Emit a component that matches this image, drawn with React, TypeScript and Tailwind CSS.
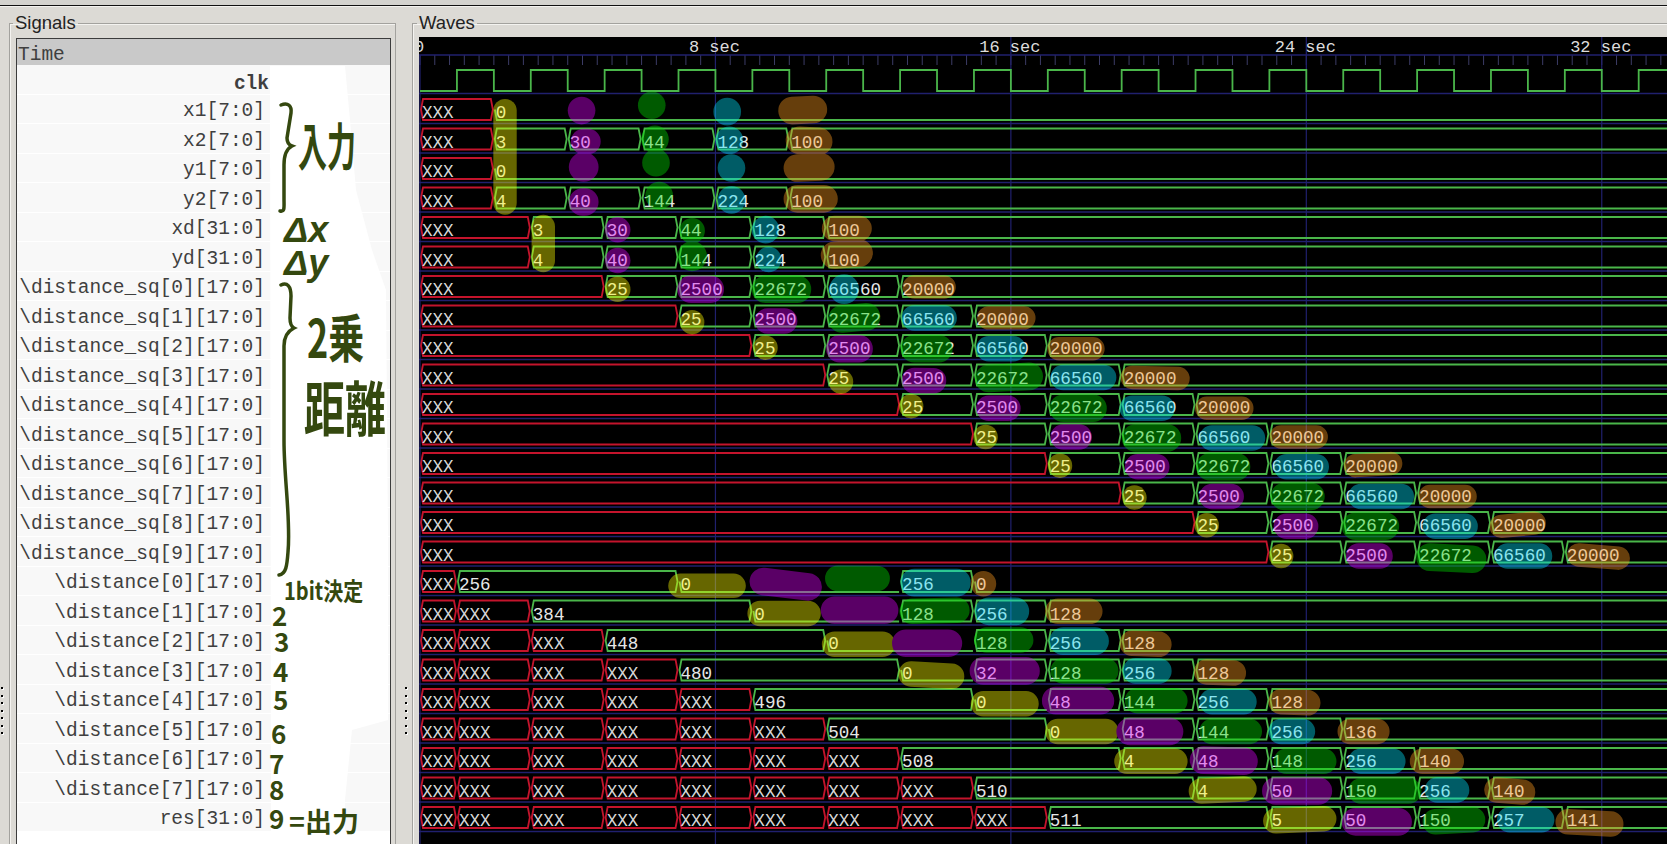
const SEC = 36.93;
const T0 = 420;
const ROW_TOP = 99;
const ROW_H = 29.5;
const BOX_H = 21;
const GREEN = "#4ab64a";
const RED = "#c4142c";
const BLUE = "#20206e";

type Seg = [number, string];

const xs = (...t: number[]): Seg[] => t.map((s) => [s, "XXX"]);
const sq = (k: number): Seg[] => [
  [0, "XXX"],
  [5 + 2 * k, "25"],
  [7 + 2 * k, "2500"],
  [9 + 2 * k, "22672"],
  [11 + 2 * k, "66560"],
  [13 + 2 * k, "20000"],
];

const signals: { name: string; segs: Seg[] }[] = [
  { name: "x1[7:0]", segs: [[0, "XXX"], [2, "0"]] },
  { name: "x2[7:0]", segs: [[0, "XXX"], [2, "3"], [4, "30"], [6, "44"], [8, "128"], [10, "100"]] },
  { name: "y1[7:0]", segs: [[0, "XXX"], [2, "0"]] },
  { name: "y2[7:0]", segs: [[0, "XXX"], [2, "4"], [4, "40"], [6, "144"], [8, "224"], [10, "100"]] },
  { name: "xd[31:0]", segs: [[0, "XXX"], [3, "3"], [5, "30"], [7, "44"], [9, "128"], [11, "100"]] },
  { name: "yd[31:0]", segs: [[0, "XXX"], [3, "4"], [5, "40"], [7, "144"], [9, "224"], [11, "100"]] },
  ...[0, 1, 2, 3, 4, 5, 6, 7, 8, 9].map((k) => ({ name: `\\distance_sq[${k}][17:0]`, segs: sq(k) })),
  { name: "\\distance[0][17:0]", segs: [...xs(0), [1, "256"], [7, "0"], [13, "256"], [15, "0"]] },
  { name: "\\distance[1][17:0]", segs: [...xs(0, 1), [3, "384"], [9, "0"], [13, "128"], [15, "256"], [17, "128"]] },
  { name: "\\distance[2][17:0]", segs: [...xs(0, 1, 3), [5, "448"], [11, "0"], [15, "128"], [17, "256"], [19, "128"]] },
  { name: "\\distance[3][17:0]", segs: [...xs(0, 1, 3, 5), [7, "480"], [13, "0"], [15, "32"], [17, "128"], [19, "256"], [21, "128"]] },
  { name: "\\distance[4][17:0]", segs: [...xs(0, 1, 3, 5, 7), [9, "496"], [15, "0"], [17, "48"], [19, "144"], [21, "256"], [23, "128"]] },
  { name: "\\distance[5][17:0]", segs: [...xs(0, 1, 3, 5, 7, 9), [11, "504"], [17, "0"], [19, "48"], [21, "144"], [23, "256"], [25, "136"]] },
  { name: "\\distance[6][17:0]", segs: [...xs(0, 1, 3, 5, 7, 9, 11), [13, "508"], [19, "4"], [21, "48"], [23, "148"], [25, "256"], [27, "140"]] },
  { name: "\\distance[7][17:0]", segs: [...xs(0, 1, 3, 5, 7, 9, 11, 13), [15, "510"], [21, "4"], [23, "50"], [25, "150"], [27, "256"], [29, "140"]] },
  { name: "res[31:0]", segs: [...xs(0, 1, 3, 5, 7, 9, 11, 13, 15), [17, "511"], [23, "5"], [25, "50"], [27, "150"], [29, "257"], [31, "141"]] },
];

// highlighter marks, measured on the 1568 wide picture: x1 y1 x2 y2 width
type Mark = [number, number, number, number, number];
const OLIVE: Mark[] = [
  [475, 104, 475, 191, 22], [511, 213, 511, 245, 22], [581, 272, 581, 272, 24], [651, 303, 651, 303, 23],
  [720, 327, 720, 327, 23], [791, 359, 791, 359, 23], [857, 382, 857, 382, 23], [927, 411, 927, 411, 23],
  [997, 438, 997, 438, 23], [1067, 468, 1067, 468, 23], [1135, 494, 1135, 494, 23], [1205, 523, 1205, 523, 23],
  [640, 551, 690, 551, 23], [715, 577, 760, 577, 24], [785, 606, 830, 606, 24], [857, 634, 895, 636, 24],
  [925, 662, 965, 662, 24], [995, 688, 1040, 688, 24], [1060, 716, 1105, 716, 24], [1130, 744, 1170, 742, 24],
  [1200, 772, 1245, 770, 24],
];
const PURPLE: Mark[] = [
  [547, 104, 547, 104, 26], [549, 133, 553, 133, 24], [549, 157, 549, 157, 28], [548, 190, 550, 190, 26],
  [581, 216, 581, 216, 24], [581, 245, 581, 245, 24], [650, 272, 668, 272, 26], [722, 302, 738, 302, 24],
  [790, 328, 808, 328, 26], [860, 358, 878, 358, 24], [930, 384, 948, 384, 24], [1000, 411, 1015, 411, 24],
  [1070, 439, 1088, 439, 24], [1140, 467, 1158, 467, 24], [1210, 495, 1228, 495, 24], [1278, 523, 1298, 523, 24],
  [718, 547, 760, 552, 26], [785, 574, 832, 574, 26], [852, 605, 892, 605, 26], [925, 631, 965, 631, 26],
  [993, 659, 1035, 659, 26], [1063, 688, 1100, 688, 26], [1132, 715, 1170, 716, 26], [1200, 744, 1240, 744, 26],
  [1275, 773, 1315, 773, 26],
];
const DARKGREEN: Mark[] = [
  [613, 99, 613, 99, 26], [616, 131, 616, 131, 26], [617, 153, 617, 153, 26], [620, 184, 620, 184, 26],
  [651, 217, 651, 217, 24], [651, 241, 651, 241, 28], [720, 272, 750, 272, 26], [792, 300, 815, 298, 26],
  [860, 328, 883, 328, 26], [930, 356, 968, 354, 26], [1000, 384, 1028, 384, 26], [1068, 412, 1098, 412, 26],
  [1138, 439, 1163, 439, 26], [1208, 467, 1233, 467, 26], [1275, 495, 1303, 495, 26], [1345, 524, 1385, 526, 26],
  [788, 544, 825, 544, 24], [858, 575, 900, 574, 24], [928, 602, 960, 602, 24], [1000, 631, 1040, 631, 24],
  [1070, 659, 1105, 659, 24], [1140, 688, 1175, 688, 24], [1210, 716, 1245, 716, 24], [1280, 744, 1325, 744, 24],
  [1350, 773, 1385, 771, 24],
];
const TEAL: Mark[] = [
  [684, 105, 684, 105, 26], [686, 132, 686, 132, 26], [688, 158, 688, 158, 26], [688, 188, 688, 188, 26],
  [720, 216, 720, 216, 26], [723, 244, 723, 244, 24], [794, 272, 794, 272, 28], [860, 299, 888, 299, 24],
  [930, 328, 953, 328, 24], [1000, 355, 1038, 355, 24], [1065, 384, 1093, 384, 24], [1140, 412, 1178, 412, 24],
  [1210, 439, 1238, 439, 24], [1280, 467, 1318, 467, 24], [1350, 495, 1378, 495, 24], [1418, 523, 1448, 523, 24],
  [860, 548, 900, 548, 26], [930, 575, 955, 575, 26], [1000, 603, 1030, 603, 26], [1068, 631, 1090, 631, 24],
  [1140, 660, 1170, 660, 24], [1205, 688, 1225, 688, 24], [1280, 716, 1310, 716, 24], [1352, 743, 1370, 743, 24],
  [1420, 771, 1450, 771, 24],
];
const BROWN: Mark[] = [
  [745, 104, 765, 103, 26], [752, 132, 770, 133, 26], [750, 158, 772, 157, 26], [750, 187, 775, 187, 26],
  [785, 215, 808, 215, 24], [785, 240, 808, 238, 26], [860, 270, 888, 270, 22], [930, 299, 963, 299, 22],
  [996, 328, 1028, 328, 22], [1065, 355, 1108, 356, 22], [1135, 384, 1168, 384, 22], [1205, 411, 1238, 411, 22],
  [1275, 438, 1308, 436, 22], [1345, 467, 1378, 467, 22], [1412, 495, 1443, 492, 22], [1485, 522, 1522, 525, 22],
  [925, 549, 925, 549, 24], [995, 575, 1025, 575, 24], [1065, 605, 1090, 606, 24], [1135, 632, 1160, 633, 24],
  [1205, 660, 1230, 661, 24], [1270, 688, 1295, 688, 24], [1338, 716, 1365, 716, 24], [1408, 743, 1432, 745, 24],
  [1475, 773, 1515, 775, 24],
];
const marks: [string, Mark[]][] = [
  ["#ffff00", OLIVE],
  ["#e000ff", PURPLE],
  ["#00e000", DARKGREEN],
  ["#00e5ff", TEAL],
  ["#ff9c20", BROWN],
];

const Wave = ({ segs, top }: { segs: Seg[]; top: number }) => (
  <g>
    {segs.map(([start, label], i) => {
      const x0 = T0 + start * SEC;
      const x1 = i + 1 < segs.length ? T0 + segs[i + 1][0] * SEC : 1700;
      const bot = top + BOX_H;
      const mid = top + BOX_H / 2;
      const isX = label === "XXX";
      return (
        <g key={i}>
          {label === "0" ? (
            <path d={`M${x0 + 1} ${mid}L${x0 + 3} ${bot}H${x1 - 1}`} fill="none" stroke={GREEN} strokeWidth={1.8} />
          ) : (
            <path
              d={`M${x0 + 1} ${mid}L${x0 + 3} ${top}H${x1 - 3}L${x1 - 1} ${mid}L${x1 - 3} ${bot}H${x0 + 3}Z`}
              fill="none"
              stroke={isX ? RED : GREEN}
              strokeWidth={1.8}
            />
          )}
          <text x={x0 + 2} y={top + 19} fontSize={17.6} fill={isX ? "#d8d8d8" : "#e6e6e6"}>
            {label}
          </text>
        </g>
      );
    })}
  </g>
);

const WaveCanvas = () => {
  const clock: string[] = [`M${T0} 91`];
  for (let s = 1; s < 36; s += 2) {
    const x = T0 + s * SEC;
    clock.push(`H${x}V70H${x + SEC}V91`);
  }
  const ticks = Array.from({ length: 88 }, (_, i) => T0 + i * SEC * 0.4);
  return (
    <svg
      width={1248}
      height={807}
      viewBox="419 37 1248 807"
      className="block shrink-0 bg-black font-['Liberation_Mono',monospace]"
    >
      {ticks.map((x) => (
        <path key={x} d={`M${x} 55V65`} stroke="#3c3c66" strokeWidth={1} />
      ))}
      <path d="M419 55H1667M419 93.5H1667" stroke={BLUE} strokeWidth={1.5} />
      {signals.map((s, i) => (
        <path key={s.name} d={`M419 ${123.5 + i * ROW_H}H1667`} stroke={BLUE} strokeWidth={1.5} />
      ))}
      {[0, 8, 16, 24, 32].map((s) => (
        <g key={s}>
          <path d={`M${T0 + s * SEC} ${s ? 37 : 55}V844`} stroke={BLUE} strokeWidth={1.2} />
          <text x={T0 + s * SEC - 1} y={52} fontSize={17} fill="#dcdcdc" textAnchor="middle">
            {s ? `${s} sec` : "0"}
          </text>
        </g>
      ))}
      <path d={clock.join("")} fill="none" stroke={GREEN} strokeWidth={1.8} />
      {signals.map((s, i) => (
        <Wave key={s.name} segs={s.segs} top={ROW_TOP + i * ROW_H} />
      ))}
      <g transform="scale(1.0632)" opacity={0.4} fill="none" strokeLinecap="round">
        {marks.map(([color, list]) => (
          <g key={color} stroke={color}>
            {list.map(([x1, y1, x2, y2, w], i) => (
              <path key={i} d={`M${x1} ${y1}L${x2} ${y2 + 0.01}`} strokeWidth={w} />
            ))}
          </g>
        ))}
      </g>
    </svg>
  );
};

// hand written notes drawn on top of the signal list
const Notes = () => (
  <svg
    width={420}
    height={844}
    className="absolute top-0 left-0 pointer-events-none font-['Noto_Sans_CJK_JP',sans-serif]"
    fill="#34480f"
    fontWeight={700}
  >
    <path
      d="M270 66L345 66L350 120L356 190L372 250L386 290L388 540L388 720L352 730L345 800L345 836L271 836Z"
      fill="#ffffff"
    />
    <g fill="none" stroke="#34480f" strokeWidth={3.5} strokeLinecap="round">
      <path d="M281 105C288 102 292 106 291 113L287 138C287 143 289 145 292 146C286 149 284 155 284 165L284 198C284 208 285 212 280 211" />
      <path d="M281 285C287 282 291 286 291 296L290 318C290 325 292 327 294 328C288 331 284 336 284 346L284 440C284 480 291 520 288 552C287 566 286 574 279 575" />
    </g>
    <text transform="translate(298 166) scale(1 1.75)" fontSize={29}>入力</text>
    <text x={284} y={242} fontSize={36} fontFamily="Liberation Sans" fontStyle="italic">Δx</text>
    <text x={284} y={275} fontSize={36} fontFamily="Liberation Sans" fontStyle="italic">Δy</text>
    <text transform="translate(307 358) scale(1 1.45)" fontSize={36}>2乗</text>
    <text transform="translate(304 431) scale(1 1.45)" fontSize={41}>距離</text>
    <text transform="translate(284 600) scale(1 1.2)" fontSize={20}>1bit決定</text>
    <g fontSize={26}>
      <text x={272} y={626}>2</text>
      <text x={274} y={652}>3</text>
      <text x={273} y={682}>4</text>
      <text x={273} y={710}>5</text>
      <text x={271} y={744}>6</text>
      <text x={269} y={774}>7</text>
      <text x={269} y={800}>8</text>
      <text x={269} y={829}>9</text>
    </g>
    <text x={289} y={832} fontSize={27}>=出力</text>
  </svg>
);

const Grip = () => (
  <div className="flex flex-col gap-[5.5px] mt-[677px]">
    {[0, 1, 2, 3, 4, 5, 6].map((i) => (
      <div key={i} className="w-[2px] h-[2px] bg-black shadow-[1px_1px_0_#fff]" />
    ))}
  </div>
);

export default function App() {
  return (
    <div className="relative h-[844px] w-[1667px] overflow-hidden bg-[#dcdad5] font-['Liberation_Sans',sans-serif]">
      <div className="h-[5px] bg-[#d4d3cf]" />
      <div className="h-[1px] bg-[#111111]" />
      <div className="h-[1px] bg-[#f4f3f0]" />
      <div className="flex mt-[3px]">
        <div className="w-[9px] shrink-0 pl-[1px]">
          <Grip />
        </div>
        <fieldset className="w-[387px] shrink-0 h-[860px] border border-[#a3a29e] pl-[6px] pr-[4px] shadow-[inset_1px_1px_0_#f4f3f0]">
          <legend className="h-[26px] -ml-[3px] px-[2px] text-[18.5px] leading-[26px] text-[#222222]">Signals</legend>
          <div className="mt-[2px] h-[830px] border border-[#3c3c3c] bg-white font-['Liberation_Mono',monospace] text-[19.5px] text-[#3f3f3f]">
            <div className="flex h-[26px] items-center bg-[#c9c9c9] pl-[1px] pt-[7px]">Time</div>
            <div className="flex h-[29.5px] items-center bg-[#f8f8f8] pt-[10px] border-b border-white">
              <div className="w-[252px] text-right font-bold">clk</div>
            </div>
            {signals.map((s) => (
              <div key={s.name} className="flex h-[29.5px] items-center bg-[#f8f8f8] pt-[6px] border-b border-white">
                <div className="w-[248px] text-right whitespace-pre">{s.name}</div>
              </div>
            ))}
          </div>
        </fieldset>
        <div className="w-[16px] shrink-0 pl-[9px]">
          <Grip />
        </div>
        <fieldset className="w-[1290px] shrink-0 h-[860px] border border-[#a3a29e] pl-[6px] shadow-[inset_1px_1px_0_#f4f3f0]">
          <legend className="h-[26px] -ml-[2px] px-[2px] text-[18.5px] leading-[26px] text-[#222222]">Waves</legend>
          <div className="mt-[1px]">
            <WaveCanvas />
          </div>
        </fieldset>
      </div>
      <Notes />
    </div>
  );
}
